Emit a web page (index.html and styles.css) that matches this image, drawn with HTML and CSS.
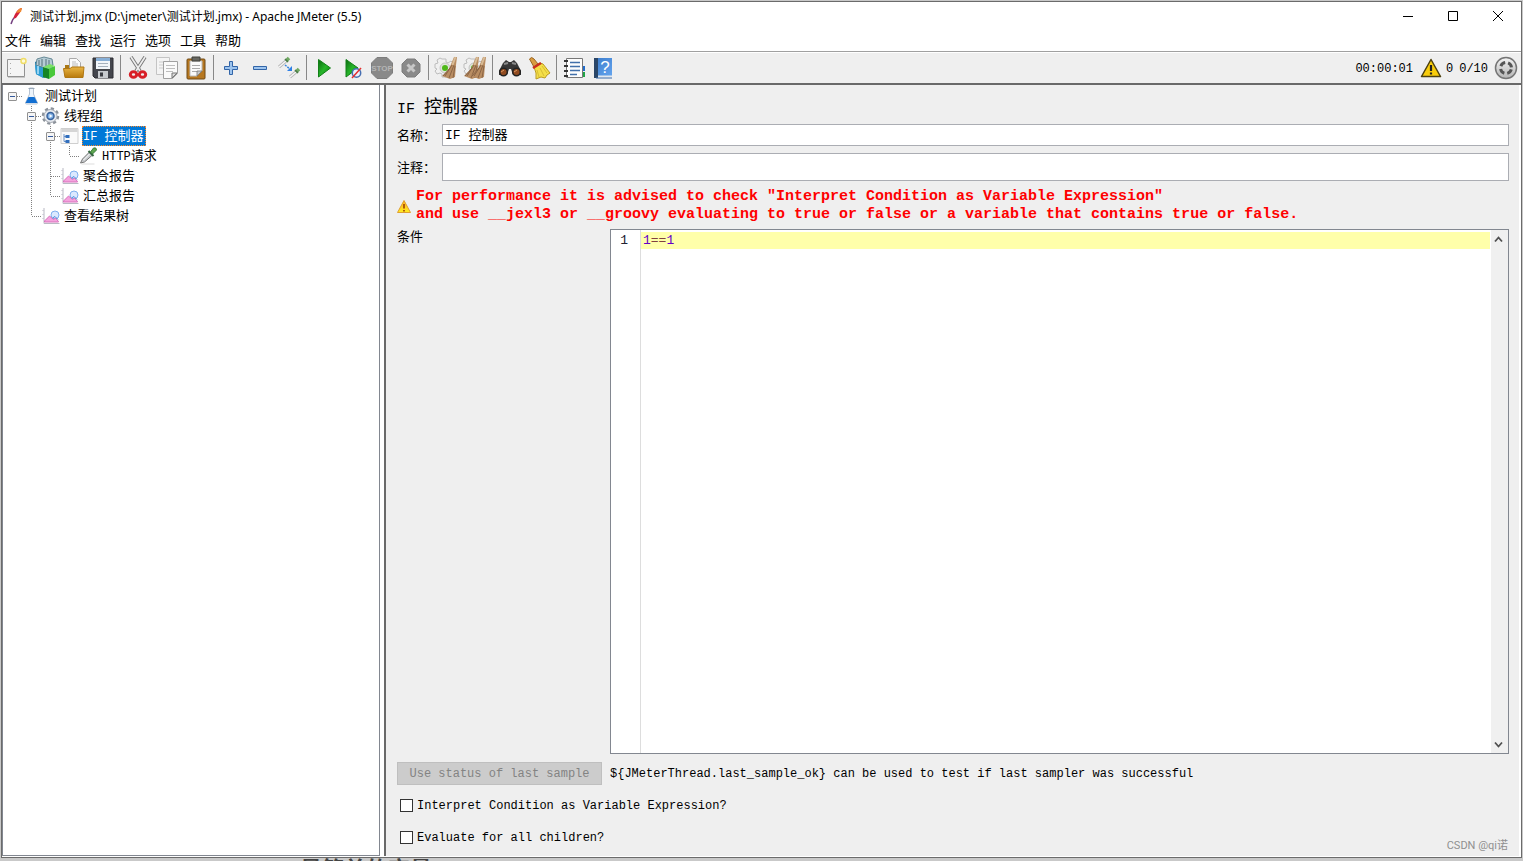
FILE: index.html
```html
<!DOCTYPE html>
<html lang="zh-CN">
<head>
<meta charset="utf-8">
<title>测试计划.jmx - Apache JMeter (5.5)</title>
<link rel="stylesheet" href="styles.css">
</head>
<body>
<svg class="defs" aria-hidden="true">
  <defs>
    <linearGradient id="green" x1="0" y1="0" x2="1" y2="1"><stop offset="0" stop-color="#0a6a10"/><stop offset=".5" stop-color="#27b52a"/><stop offset="1" stop-color="#067a0c"/></linearGradient>
    <linearGradient id="gold" x1="0" y1="0" x2="0" y2="1"><stop offset="0" stop-color="#e9b544"/><stop offset="1" stop-color="#b97a0c"/></linearGradient>
    <linearGradient id="warn" x1="0" y1="0" x2="0" y2="1"><stop offset="0" stop-color="#ffb020"/><stop offset="1" stop-color="#ffee20"/></linearGradient>
    <linearGradient id="book" x1="0" y1="0" x2="1" y2="1"><stop offset="0" stop-color="#3a7bcb"/><stop offset="1" stop-color="#64a4ee"/></linearGradient>
    <linearGradient id="silver" x1="0" y1="0" x2="0" y2="1"><stop offset="0" stop-color="#f4f4f4"/><stop offset="1" stop-color="#b4b4b4"/></linearGradient>
    <symbol id="chart" viewBox="0 0 18 18">
      <path d="M2.500 1v15.500H18M1 3.500h1M1 7.500h1M1 11.500h1" fill="none" stroke="#b9b9c4"/>
      <circle cx="13.500" cy="8" r="4" fill="#dbe9ff" stroke="#7fb0ee"/>
      <path d="M3 15v-1l5-5 4 3.500 2-1.500 3 3.500V15z" fill="#f5a3de" stroke="#d670bc"/>
      <path d="M11 11l2.500-1.500 3 3" fill="none" stroke="#4f8fdd"/>
    </symbol>
    <symbol id="gearbase" viewBox="0 0 24 24">
      <path d="M8 3h4v3l2 1 3-2 3 3-2 3v6l-3 2-3-1v3H8v-3l-2-1-3 1-2-3 2-2-2-1v-4l3-1-1-3 3-2 2 1z" fill="#f0f0f0" stroke="#bdbdbd"/>
      <circle cx="11" cy="12" r="5" fill="#dfe5da" stroke="#c5c5c5"/>
      <circle cx="11" cy="12" r="3" fill="#4fb81a"/>
    </symbol>
    <symbol id="brush" viewBox="0 0 24 24">
      <path d="M20 1h3l-1 8-1 12-5 2-8-3 7-7z" fill="#b98d62"/>
      <path d="M18 9l-7 11M20 9l-5 13M21 10l-2 12M16 12l-7 8" stroke="#8a6445" fill="none"/>
      <path d="M21.500 1l-3 8" stroke="#d9bd98" stroke-width="2"/>
    </symbol>
  </defs>
</svg>

<main class="window">
  <header class="titlebar">
    <svg class="feather" viewBox="0 0 16 18"><path d="M14 1c-4 0-7 5-9 11l3-1c2-3 5-6 6-10z" fill="#d3203d"/><path d="M14 1c-3 0-4 2-6 5l5-1z" fill="#ef8a32"/><path d="M6 11c-2 2-2 4-3 6" stroke="#744080" fill="none" stroke-width="1.500"/></svg>
    <h1 class="caption">测试计划.jmx (D:\jmeter\测试计划.jmx) - Apache JMeter (5.5)</h1>
    <div class="controls">
      <button aria-label="最小化"><svg viewBox="0 0 12 12"><path d="M1 6.500h10" stroke="#000"/></svg></button>
      <button aria-label="最大化"><svg viewBox="0 0 12 12"><path d="M1.500 1.500h9v9h-9z" fill="none" stroke="#000"/></svg></button>
      <button aria-label="关闭"><svg viewBox="0 0 12 12"><path d="M1 1l10 10M11 1L1 11" stroke="#000"/></svg></button>
    </div>
  </header>

  <nav class="menubar">
    <button>文件</button><button>编辑</button><button>查找</button><button>运行</button><button>选项</button><button>工具</button><button>帮助</button>
  </nav>

  <div class="toolbar">
    <button aria-label="新建"><svg viewBox="0 0 24 24"><path d="M3.500 3.500h17v17h-17z" fill="#f4f4f4" stroke="#929292"/><path d="M4 21.500h17" stroke="#c8c8c8"/><path d="M6.500 7v1M6.500 12v1M6.500 17v1" stroke="#aaa"/><circle cx="19.500" cy="5" r="2.500" fill="#fffbd8" stroke="#efdc66" stroke-width="1.500"/></svg></button>
    <button aria-label="模板"><svg viewBox="0 0 24 24"><path d="M2 6l9-4 9 3v13l-9 4-8-4z" fill="#1c7baa"/><path d="M4 3l7-2 8 2 1 6-8 3-9-3z" fill="#b6ccd5" stroke="#658895"/><path d="M6 4v5M9 3v7M13 3v7M16 4v5" stroke="#54707c"/><path d="M2 9l8 3v10l-7-4z" fill="#2f9dd4"/><path d="M5 10v8" stroke="#b9e5fa" stroke-width="1.500"/><path d="M10 11l6 2v10l-6-2z" fill="#168525"/><path d="M16 13l6-3v9l-6 4z" fill="#49c83a"/><path d="M10 11l7-3 5 2-6 3z" fill="#7be167"/></svg></button>
    <button aria-label="打开"><svg viewBox="0 0 24 24"><path d="M3 9h4l2 2h10v9H3z" fill="#a97815"/><path d="M7.500 2.500h7l4 4v8h-11z" fill="#fafafa" stroke="#aaa"/><path d="M10 6h4M10 8h6M10 10h6" stroke="#bbb"/><path d="M1.500 12.500H8l2-1.500h12l-1 10.500H3z" fill="url(#gold)" stroke="#b07713"/></svg></button>
    <button aria-label="保存"><svg viewBox="0 0 24 24"><path d="M2 2h20v20H4l-2-2z" fill="#44464d" stroke="#2c2d33"/><path d="M5 2h14v11H5z" fill="#f1f5fa"/><path d="M5 2h14v3H5z" fill="#87afd7"/><path d="M7 7.500h10M7 10.500h10" stroke="#a5b1be"/><path d="M7 15h10v7H7z" fill="#c8cbcf"/><path d="M9 16.500h3v4H9z" fill="#3b3d43"/></svg></button>
    <span class="sep"></span>
    <button aria-label="剪切"><svg viewBox="0 0 24 24"><path d="M5 1l9 14M19 1l-9 14" stroke="#757575" stroke-width="3.500"/><path d="M5 1l9 14M19 1l-9 14" stroke="#ededed" stroke-width="1.700"/><ellipse cx="7.500" cy="18.500" rx="3.200" ry="2.800" fill="none" stroke="#d81f27" stroke-width="3"/><ellipse cx="16.500" cy="18.500" rx="3.200" ry="2.800" fill="none" stroke="#d81f27" stroke-width="3"/></svg></button>
    <button aria-label="复制"><svg viewBox="0 0 24 24"><path d="M1.500 1.500h13v17h-13z" fill="#f4f4f4" stroke="#c4c4c4"/><path d="M4 6h8M4 9h4M4 12h4" stroke="#ccc"/><path d="M8.500 5.500h14v12l-5 5h-9z" fill="#fafafa" stroke="#a0a0a0"/><path d="M11 9.500h9M11 12.500h9M11 15.500h7" stroke="#bdbdbd"/><path d="M22 17l-5 5v-5z" fill="#dcdcdc" stroke="#777"/></svg></button>
    <button aria-label="粘贴"><svg viewBox="0 0 24 24"><rect x="3" y="3" width="18" height="20" rx="1" fill="#b77821" stroke="#704b16"/><path d="M6 5h12v10l-5 5H6z" fill="#fafafa" stroke="#bbb"/><path d="M8 1h8v4H8z" fill="#686862" stroke="#40403a"/><path d="M8 9.500h8M8 12.500h8M8 15.500h5" stroke="#aaa"/><path d="M18 15l-5 5v-5z" fill="#ccc" stroke="#777" stroke-width=".8"/></svg></button>
    <span class="sep"></span>
    <button aria-label="展开"><svg viewBox="0 0 24 24"><path d="M10.500 5.500h3v5h5v3h-5v5h-3v-5h-5v-3h5z" fill="#9dc4ee" stroke="#3265a8"/></svg></button>
    <button aria-label="折叠"><svg viewBox="0 0 24 24"><path d="M5.500 10.500h13v3h-13z" fill="#9dc4ee" stroke="#3265a8"/></svg></button>
    <button aria-label="切换"><svg viewBox="0 0 24 24"><path d="M2 11l7-6M13 21l6-5" stroke="#b5b5b5" stroke-width="3"/><path d="M2 11l7-6M13 21l6-5" stroke="#f5f5f5" stroke-width="1.500"/><path d="M9 5l3-3M19 16l3-3" stroke="#6fa862" stroke-width="3.500"/><path d="M8 3l3 3M18 14l3 3" stroke="#4b7a48" stroke-width="1.500"/><path d="M8 9l5 4" stroke="#3985dc" stroke-width="1.500" stroke-dasharray="2 1"/><path d="M15 10v5h-5z" fill="#2f80e6"/></svg></button>
    <span class="sep"></span>
    <button aria-label="启动"><svg viewBox="0 0 24 24"><path d="M6.500 3.500l12 8.500-12 9z" fill="url(#green)" stroke="#138018"/></svg></button>
    <button aria-label="不停顿开始"><svg viewBox="0 0 24 24"><path d="M5 3.500l12 8.500-12 9z" fill="url(#green)" stroke="#138018"/><circle cx="15.500" cy="17" r="4.200" fill="#edf2fc" stroke="#466fb2" stroke-width="1.500"/><path d="M11 22l9-10" stroke="#e22f2f" stroke-width="1.500"/></svg></button>
    <button aria-label="停止" disabled><svg viewBox="0 0 24 24"><path d="M7 1.500h10l5.500 5.500v10L17 22.500H7L1.500 17V7z" fill="#898989" stroke="#7d7d7d"/><text x="12" y="15" class="stop-text">STOP</text></svg></button>
    <button aria-label="关闭线程" disabled><svg viewBox="0 0 24 24"><path d="M8 3h8l5 5v8l-5 5H8l-5-5V8z" fill="#898989" stroke="#7d7d7d"/><path d="M8.500 8.500l7 7M15.500 8.500l-7 7" stroke="#c7c7c7" stroke-width="3"/></svg></button>
    <span class="sep"></span>
    <button aria-label="清除"><svg viewBox="0 0 24 24"><use href="#gearbase"/><use href="#brush"/></svg></button>
    <button aria-label="清除全部"><svg viewBox="0 0 24 24"><use href="#gearbase"/><use href="#brush" x="-7"/><use href="#brush"/></svg></button>
    <span class="sep"></span>
    <button aria-label="搜索"><svg viewBox="0 0 24 24"><path d="M5 7l3-3 3 2h2l3-2 3 3 4 8v4h-8l-2-6h-2l-2 6H1v-4z" fill="#373737"/><path d="M6 8l4-1M14 7l4 1" stroke="#898989" stroke-width="2"/><circle cx="5.500" cy="16" r="3.800" fill="#914b20" stroke="#222" stroke-width="1.500"/><circle cx="18.500" cy="16" r="3.800" fill="#914b20" stroke="#222" stroke-width="1.500"/><path d="M3 16l3-2M16 16l3-2" stroke="#dc9863"/></svg></button>
    <button aria-label="重置搜索"><svg viewBox="0 0 24 24"><path d="M2.500 3q2-3 4.500 0l4 5-4 3z" fill="#d89c42" stroke="#9b6623"/><path d="M7 11l6-4 3 1 7 9-3 2-2 3-4-1-5 2q1-6-2-12z" fill="#f4df48" stroke="#bb9b1f"/><path d="M10 14l2 7M13 12l4 8M15 10l5 7" stroke="#d8bd35"/><path d="M6 12l8-5" stroke="#ca2e20" stroke-width="2.500"/></svg></button>
    <span class="sep"></span>
    <button aria-label="函数助手"><svg viewBox="0 0 24 24"><path d="M4.500 2.500h16v19h-16z" fill="#fdfdfd" stroke="#777"/><path d="M8 6.500h10M8 10.500h10M8 14.500h10M8 18.500h7" stroke="#4270aa" stroke-width="1.500"/><path d="M2 5h4M2 10h4M2 15h4M2 20h4" stroke="#333" stroke-width="2"/><path d="M21 10h2v5h-2z" fill="#226ccb"/><path d="M21 16h2v5h-2z" fill="#22a446"/></svg></button>
    <button aria-label="帮助"><svg viewBox="0 0 24 24"><path d="M3 2h18v18H3z" fill="url(#book)"/><path d="M3 2h4v20H3z" fill="#2a4668"/><path d="M7 20.500h14" stroke="#e2e8ef" stroke-width="2"/><path d="M5 22h16" stroke="#3a6cab"/><text x="14" y="17" class="help-text">?</text></svg></button>
    <div class="status">
      <span>00:00:01</span>
      <button class="log" aria-label="日志"><svg viewBox="0 0 22 22"><path d="M11 2.500L20.500 19.500h-19z" fill="#f9cd0c" stroke="#4d4110" stroke-width="1.500" stroke-linejoin="round"/><path d="M11 8v6M11 15.500v2" stroke="#222" stroke-width="2.200"/></svg></button>
      <span class="errors">0</span>
      <span class="threads">0/10</span>
      <svg class="remote" viewBox="0 0 24 24"><circle cx="12" cy="12" r="10.500" fill="url(#silver)" stroke="#757575" stroke-width="1.500"/><circle cx="12" cy="12" r="5.500" fill="none" stroke="#555" stroke-width="3" stroke-dasharray="5.600 3.040" stroke-dashoffset="-1.520"/></svg>
    </div>
  </div>

  <div class="split">
    <section class="tree" role="tree">
      <div class="node" role="treeitem"><i class="cell right box"></i>
        <svg viewBox="0 0 18 18"><path d="M7 1h4v6l4 9q0 1-1 1H4q-1 0-1-1l4-9z" fill="#edf4fb" stroke="#b7c3d2"/><path d="M6 10h6l3 6H3z" fill="#126fd2"/><path d="M6 1.500h6" stroke="#9aa9b8"/></svg>
        <span class="label">测试计划</span></div>
      <div class="node" role="treeitem"><i class="cell"></i><i class="cell up down right box"></i>
        <svg viewBox="0 0 18 18"><circle cx="9" cy="9" r="7.500" fill="none" stroke="#8c929a" stroke-width="2.500" stroke-dasharray="3.200 2.690"/><circle cx="9" cy="9" r="6.500" fill="#e6e9ee" stroke="#a3a9b2"/><circle cx="9" cy="9" r="3.500" fill="#7fb0e6" stroke="#3a639c" stroke-width="1.500"/><path d="M8 7l3 2-3 2z" fill="#f4faff"/></svg>
        <span class="label">线程组</span></div>
      <div class="node" role="treeitem"><i class="cell"></i><i class="cell up down"></i><i class="cell up down right box"></i>
        <svg viewBox="0 0 18 18"><path d="M.5 1.500h17v15H.5z" fill="#fafafa" stroke="#cfcfcf"/><path d="M1 2h16v3H1z" fill="#d5d5d5"/><path d="M3.500 7v7.500M3.500 9.500H6M3.500 14.500H6" fill="none" stroke="#6b91c6"/><path d="M5 8h4v3H5zM5 13h4v3H5z" fill="#316fbd"/></svg>
        <span class="label selected"><span class="latin">IF </span>控制器</span></div>
      <div class="node" role="treeitem"><i class="cell"></i><i class="cell up down"></i><i class="cell up down"></i><i class="cell up right"></i>
        <svg viewBox="0 0 18 18"><path d="M2 17h13" stroke="#ddd"/><path d="M1 16l2-4 7-7 3 3-8 7z" fill="#c9cccf" stroke="#777"/><path d="M4 13l6-6" stroke="#fff"/><path d="M9 4l5 5" stroke="#356640" stroke-width="2"/><path d="M11 5l3-4q3-1 3 2l-4 4z" fill="#5fa74f" stroke="#387b3b"/></svg>
        <span class="label"><span class="latin">HTTP</span>请求</span></div>
      <div class="node" role="treeitem"><i class="cell"></i><i class="cell up down"></i><i class="cell up down right"></i><svg><use href="#chart"/></svg><span class="label">聚合报告</span></div>
      <div class="node" role="treeitem"><i class="cell"></i><i class="cell up down"></i><i class="cell up right"></i><svg><use href="#chart"/></svg><span class="label">汇总报告</span></div>
      <div class="node" role="treeitem"><i class="cell"></i><i class="cell up right"></i><svg><use href="#chart"/></svg><span class="label">查看结果树</span></div>
    </section>

    <section class="panel">
      <h2 class="heading"><span class="heading-latin">IF </span>控制器</h2>
      <div class="field"><label for="name">名称：</label><input id="name" type="text" value="IF 控制器"></div>
      <div class="field tall"><label for="comment">注释：</label><input id="comment" type="text"></div>
      <div class="advice">
        <svg viewBox="0 0 14 16"><path d="M7 2.500L13.500 14.500H.5z" fill="url(#warn)" stroke="#e0a030" stroke-linejoin="round"/><path d="M7 6v4.500M7 12v1.500" stroke="#a95008" stroke-width="1.800"/></svg>
        <p>For performance it is advised to check "Interpret Condition as Variable Expression"<br>and use __jexl3 or __groovy evaluating to true or false or a variable that contains true or false.</p>
      </div>
      <div class="condition">
        <span class="condition-label" id="cond">条件</span>
        <div class="editor">
          <div class="gutter">1</div>
          <div class="code" role="textbox" aria-multiline="true" aria-labelledby="cond" contenteditable="true" spellcheck="false"><div class="line"><span class="num">1</span><span class="op">==</span><span class="num">1</span></div></div>
          <div class="scroll">
            <button aria-label="向上滚动"><svg viewBox="0 0 9 9"><path d="M1 6.500l3.500-4L8 6.500" fill="none" stroke="#505050" stroke-width="1.800"/></svg></button>
            <button aria-label="向下滚动"><svg viewBox="0 0 9 9"><path d="M1 2.500l3.500 4L8 2.500" fill="none" stroke="#505050" stroke-width="1.800"/></svg></button>
          </div>
        </div>
      </div>
      <div class="last-status"><button disabled>Use status of last sample</button><span>${JMeterThread.last_sample_ok} can be used to test if last sampler was successful</span></div>
      <label class="check"><input type="checkbox"><span>Interpret Condition as Variable Expression?</span></label>
      <label class="check"><input type="checkbox"><span>Evaluate for all children?</span></label>
      <span class="watermark">CSDN @qi诺</span>
    </section>
  </div>
</main>
<div class="behind">最简单的变量</div>
</body>
</html>
```

FILE: styles.css
```css
* { box-sizing: border-box; }
body {
  margin: 0;
  height: 100vh;
  overflow: hidden;
  display: flex;
  flex-direction: column;
  background: #c9c9c9;
  color: #000;
  font: 12px "Liberation Mono", "Noto Sans CJK SC", monospace;
}
button { border: 0; padding: 0; margin: 0; background: none; font: inherit; color: inherit; }
svg { display: block; flex: none; }
.defs { position: absolute; width: 0; height: 0; }

.window {
  flex: 1;
  min-height: 0;
  margin: 1px 1px 0;
  border: 1px solid #6b6b6b;
  background: #fff;
  display: flex;
  flex-direction: column;
}

.titlebar { display: flex; align-items: center; height: 29px; padding: 0 1px 1px 6px; }
.feather { width: 16px; height: 18px; }
.caption { margin: 0 auto 0 6px; font: 12px "Noto Sans", "Noto Sans CJK SC", sans-serif; }
.controls { display: flex; }
.controls button { width: 45px; height: 28px; display: grid; place-items: center; }
.controls svg { width: 12px; height: 12px; }

.menubar { display: flex; gap: 9px; height: 20px; padding: 0 3px 2px; }
.menubar button { font: 13px/18px "Noto Sans CJK SC", sans-serif; }

.toolbar {
  display: flex;
  align-items: center;
  height: 34px;
  border-top: 1px solid #a0a0a0;
  border-bottom: 2px solid #696969;
  background: #efefef;
  box-shadow: inset 0 1px #fff;
}
.toolbar > button { width: 29px; height: 30px; padding-right: 2px; display: grid; place-items: center; }
.toolbar > button svg { width: 24px; height: 24px; }
.sep { width: 6px; height: 25px; background: linear-gradient(#888, #888) 2px 0 / 1px 100% no-repeat; }
.stop-text { font: bold 8px "Liberation Sans", sans-serif; text-anchor: middle; fill: #b5b5b5; }
.help-text { font: 17px "Liberation Sans", sans-serif; text-anchor: middle; fill: #fff; }
.status { display: flex; align-items: center; margin-left: auto; padding-right: 3px; }
.status span { padding-top: 2px; }
.log { margin: 0 4px 0 7px; }
.log svg { width: 22px; height: 22px; }
.errors { margin-right: 6px; }
.remote { width: 24px; height: 24px; margin-left: 6px; }

.split { flex: 1; min-height: 0; display: flex; gap: 4px; background: #fff; padding: 0 2px 1px 0; }
.tree { width: 378px; flex: none; padding-top: 1px; border: 1px solid #828790; border-top: 0; background: #fff; }
.node { display: flex; align-items: center; height: 20px; font-size: 13px; }
.node > svg { width: 19px; height: 18px; }
.cell {
  --v: repeating-linear-gradient(#808080 0 1px, transparent 1px 2px);
  --h: repeating-linear-gradient(90deg, #808080 0 1px, transparent 1px 2px);
  position: relative;
  width: 19px;
  height: 20px;
  flex: none;
  background-repeat: no-repeat;
}
.up { background-image: var(--v); background-position: 9px 0; background-size: 1px 10px; }
.up.down { background-size: 1px 20px; }
.right { background-image: var(--h); background-position: 10px 10px; background-size: 9px 1px; }
.up.right { background-image: var(--v), var(--h); background-position: 9px 0, 10px 10px; background-size: 1px 10px, 9px 1px; }
.up.down.right { background-size: 1px 20px, 9px 1px; }
.box::before {
  content: "";
  position: absolute;
  inset: 6px 5px 5px;
  border: 1px solid #919191;
  border-radius: 1px;
  background: linear-gradient(#34599b, #34599b) center / 5px 1px no-repeat #f5f5f5;
}
.label { margin-left: 3px; padding: 2px 1px 0; line-height: 16px; white-space: pre; border: 1px solid transparent; border-left: 0; }
.latin { font-size: 12px; }
.selected { background: #0078d7; color: #fff; border: 1px dotted #ff8728; padding: 2px 1px 0 0; }

.panel {
  position: relative;
  flex: 1;
  min-width: 0;
  display: flex;
  flex-direction: column;
  padding: 9px 10px 7px 11px;
  border-left: 2px solid #696969;
  background: #efefef;
}
.heading { margin: 0; font-weight: 400; font-size: 18px; line-height: 28px; white-space: pre; }
.heading-latin { font-size: 15px; }
.field { display: flex; align-items: center; height: 22px; margin-bottom: 7px; font-size: 13px; }
.field label { width: 45px; padding-bottom: 2px; white-space: nowrap; }
.field input { flex: 1; min-width: 0; height: 100%; padding: 0 2px 3px; border: 1px solid #abadb3; background: #fff; font: inherit; outline: 0; }
.field.tall { height: 28px; }
.advice { display: flex; align-items: center; gap: 5px; height: 36px; margin-bottom: 5px; color: #f00; font-size: 15px; font-weight: 700; line-height: 18px; }
.advice svg { width: 14px; height: 16px; }
.advice p { margin: 0; white-space: nowrap; }
.condition { flex: 1; min-height: 0; display: flex; }
.condition-label { width: 213px; flex: none; font-size: 13px; line-height: 17px; }
.editor { flex: 1; min-width: 0; display: flex; border: 1px solid #828790; background: #fff; font-size: 13px; line-height: 17px; padding-top: 2px; }
.gutter { width: 30px; padding-right: 12px; text-align: right; border-right: 1px solid #ddd; color: #223; margin-top: -2px; padding-top: 2px; }
.code { flex: 1; min-width: 0; outline: 0; }
.line { background: #ffffaa; padding-left: 2px; margin-right: 1px; }
.num { color: #6400c8; }
.op { color: #804040; }
.scroll { width: 17px; margin-top: -2px; background: #f0f0f0; display: flex; flex-direction: column; justify-content: space-between; }
.scroll button { height: 18px; padding-right: 2px; display: grid; place-items: center; }
.scroll svg { width: 9px; height: 9px; }
.last-status { display: flex; align-items: center; gap: 8px; margin: 8px 0; height: 23px; white-space: nowrap; }
.last-status button { width: 205px; height: 23px; padding-top: 1px; background: #ccc; border: 1px solid #bfbfbf; color: #838383; }
.last-status span { padding-top: 1px; }
.check { display: flex; align-items: center; gap: 4px; height: 24px; margin-bottom: 8px; padding-left: 3px; }
.check:last-of-type { margin-bottom: 0; }
.check input { appearance: none; width: 13px; height: 13px; margin: 0; border: 1px solid #333; background: #fff; }
.check span { padding-top: 2px; }
.watermark { position: absolute; right: 11px; bottom: 2px; color: #8f8f8f; font: 11px/16px Roboto, "Noto Sans CJK SC", sans-serif; }

.behind { height: 3px; flex: none; overflow: hidden; padding-left: 300px; color: #444; font: bold 22px/18px "Noto Sans CJK SC", sans-serif; }
```
